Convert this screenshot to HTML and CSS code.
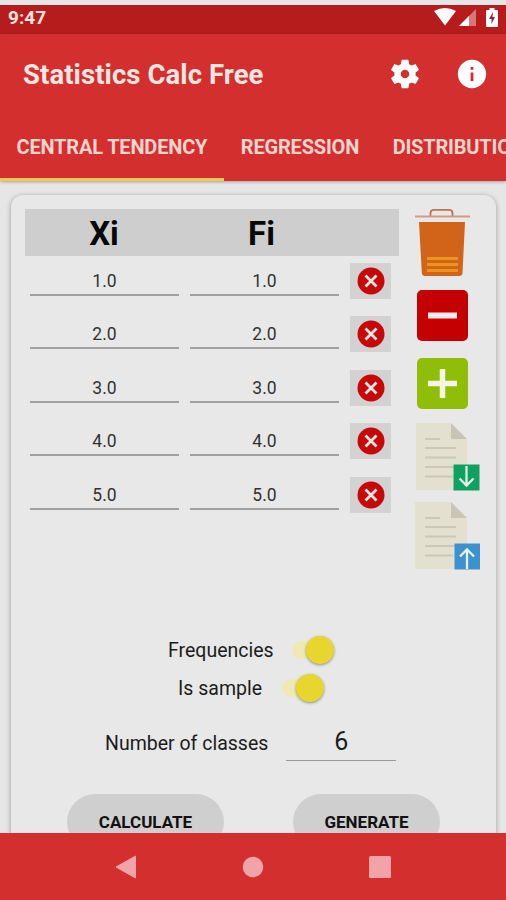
FILE: index.html
```html
<!DOCTYPE html>
<html lang="en">
<head>
  <meta charset="utf-8">
  <title>Statistics Calc Free</title>
  <link rel="stylesheet" href="styles.css">
</head>
<body>
  <div class="statusbar">
    <span class="time">9:47</span>
    <svg class="wifi" width="22" height="18" viewBox="0 0 22 18"><path d="M0 3Q11 -3 22 3L11 17.500Z" fill="#fff"/></svg>
    <svg class="signal" width="17" height="17" viewBox="0 0 17 17"><path d="M0 17L17 0V17Z" fill="#dc7676"/><path d="M0 17L10 7V17Z" fill="#fff"/></svg>
    <svg class="battery" width="12" height="19" viewBox="0 0 12 19"><path d="M3.500 2V0h5v2H11q1 0 1 1v15q0 1-1 1H1q-1 0-1-1V3q0-1 1-1z" fill="#fff"/><path d="M7 4L3 11h2.500v5L9 9H6.500z" fill="#8d2a4a"/></svg>
  </div>

  <header class="header">
    <div class="toolbar">
      <h1>Statistics Calc Free</h1>
      <svg class="gear" width="34" height="34" viewBox="0 0 24 24"><path fill="#fff" d="M19.430 12.980c.04-.32.07-.64.07-.98s-.03-.66-.07-.98l2.110-1.650c.19-.15.24-.42.12-.64l-2-3.460c-.12-.22-.39-.3-.61-.22l-2.490 1c-.52-.4-1.080-.73-1.690-.98l-.38-2.650C14.460 2.180 14.250 2 14 2h-4c-.25 0-.46.18-.49.42l-.38 2.650c-.61.25-1.170.59-1.690.98l-2.490-1c-.23-.09-.49 0-.61.22l-2 3.460c-.13.22-.07.49.12.64l2.110 1.650c-.04.32-.07.65-.07.98s.03.66.07.98l-2.110 1.650c-.19.15-.24.42-.12.64l2 3.460c.12.22.39.3.61.22l2.490-1c.52.4 1.080.73 1.690.98l.38 2.650c.03.24.24.42.49.42h4c.25 0 .46-.18.49-.42l.38-2.650c.61-.25 1.170-.59 1.690-.98l2.490 1c.23.09.49 0 .61-.22l2-3.460c.12-.22.07-.49-.12-.64l-2.110-1.650zM12 15c-1.660 0-3-1.340-3-3s1.340-3 3-3 3 1.340 3 3-1.340 3-3 3z"/></svg>
      <svg class="info" width="34" height="34" viewBox="0 0 24 24"><path fill="#fff" d="M12 2C6.480 2 2 6.480 2 12s4.480 10 10 10 10-4.480 10-10S17.520 2 12 2zm1 15h-2v-6h2v6zm0-8h-2V7h2v2z"/></svg>
    </div>
    <nav class="tabs">
      <span class="tab active">CENTRAL TENDENCY</span>
      <span class="tab">REGRESSION</span>
      <span class="tab">DISTRIBUTIONS</span>
    </nav>
  </header>

  <main class="content">
    <div class="card">
      <div class="data">
        <div class="table">
          <div class="thead"><b>Xi</b><b>Fi</b></div>
          <div class="row">
            <span class="value">1.0</span><span class="value">1.0</span>
            <span class="delete"><svg width="28" height="28" viewBox="0 0 28 28"><circle cx="14" cy="14" r="13.500" fill="#c60808"/><path d="M8.500 8.500l11 11M19.500 8.500l-11 11" stroke="#fbe4e4" stroke-width="2.800"/></svg></span>
          </div>
          <div class="row">
            <span class="value">2.0</span><span class="value">2.0</span>
            <span class="delete"><svg width="28" height="28" viewBox="0 0 28 28"><circle cx="14" cy="14" r="13.500" fill="#c60808"/><path d="M8.500 8.500l11 11M19.500 8.500l-11 11" stroke="#fbe4e4" stroke-width="2.800"/></svg></span>
          </div>
          <div class="row">
            <span class="value">3.0</span><span class="value">3.0</span>
            <span class="delete"><svg width="28" height="28" viewBox="0 0 28 28"><circle cx="14" cy="14" r="13.500" fill="#c60808"/><path d="M8.500 8.500l11 11M19.500 8.500l-11 11" stroke="#fbe4e4" stroke-width="2.800"/></svg></span>
          </div>
          <div class="row">
            <span class="value">4.0</span><span class="value">4.0</span>
            <span class="delete"><svg width="28" height="28" viewBox="0 0 28 28"><circle cx="14" cy="14" r="13.500" fill="#c60808"/><path d="M8.500 8.500l11 11M19.500 8.500l-11 11" stroke="#fbe4e4" stroke-width="2.800"/></svg></span>
          </div>
          <div class="row">
            <span class="value">5.0</span><span class="value">5.0</span>
            <span class="delete"><svg width="28" height="28" viewBox="0 0 28 28"><circle cx="14" cy="14" r="13.500" fill="#c60808"/><path d="M8.500 8.500l11 11M19.500 8.500l-11 11" stroke="#fbe4e4" stroke-width="2.800"/></svg></span>
          </div>
        </div>

        <div class="tools">
          <!-- trash -->
          <svg class="trash" width="56" height="68" viewBox="0 0 56 68">
            <path d="M15.500 7V4Q15.500 .9 19 .9H34Q37.500 .9 37.500 4V7" fill="none" stroke="#bd7250" stroke-width="1.800"/>
            <path d="M0 7.500H55" stroke="#d39a80" stroke-width="2"/>
            <path d="M4 13H50L47.500 64Q47.300 67 44 67H10Q7 67 6.800 64Z" fill="#d26419"/>
            <path d="M12 49.500H43M12 55.500H43M12 61.500H43" stroke="#e8961c" stroke-width="3"/>
          </svg>
          <!-- remove / add row -->
          <svg class="minus" width="51" height="51" viewBox="0 0 51 51"><rect width="51" height="51" rx="5" fill="#c40000"/><path d="M11 25.500H40" stroke="#fbe9e9" stroke-width="6"/></svg>
          <svg class="plus" width="51" height="51" viewBox="0 0 51 51"><rect width="51" height="51" rx="5" fill="#90be08"/><path d="M11 25.500H40M25.500 11V40" stroke="#f3f6e4" stroke-width="5.500"/></svg>
          <!-- import / export -->
          <svg class="doc" width="65" height="68" viewBox="0 0 65 68">
            <path d="M1 0H36L52 16V67H1Z" fill="#e3e0d0"/>
            <path d="M36 0L52 16H36Z" fill="#c9c5b5"/>
            <path d="M10 16H25M10 25H41M10 34.500H41M10 44H41M10 53.500H38" stroke="#cbc8b9" stroke-width="1.800"/>
            <rect x="38.500" y="41.500" width="26" height="26" fill="#10a160"/>
            <path d="M51.500 43V62M44.500 55.500L51.500 62.500L58.500 55.500" fill="none" stroke="#e4f4e8" stroke-width="2.300"/>
          </svg>
          <svg class="doc" width="65" height="68" viewBox="0 0 65 68">
            <path d="M0 0H36L52 16V67H0Z" fill="#e3e0d0"/>
            <path d="M36 0L52 16H36Z" fill="#c9c5b5"/>
            <path d="M10 16H25M10 25H41M10 34.500H41M10 44H41M10 53.500H38" stroke="#cbc8b9" stroke-width="1.800"/>
            <rect x="39.500" y="41.500" width="25.500" height="26" fill="#3d92cd"/>
            <path d="M52 67V48M45 54.500L52 47.500L59 54.500" fill="none" stroke="#e4f1fa" stroke-width="2.300"/>
          </svg>
        </div>
      </div>

      <div class="option frequencies">Frequencies <span class="switch"></span></div>
      <div class="option sample">Is sample <span class="switch"></span></div>
      <div class="classes">Number of classes <span class="number">6</span></div>
      <div class="buttons">
        <span class="button calculate">CALCULATE</span>
        <span class="button generate">GENERATE</span>
      </div>
    </div>
  </main>

  <footer class="navbar">
    <svg width="22" height="24" viewBox="0 0 22 24"><path d="M1 12L20.500 1V23Z" fill="#f2a3a8" stroke="#f2a3a8" stroke-linejoin="round"/></svg>
    <svg width="22" height="22" viewBox="0 0 22 22"><circle cx="11" cy="11" r="10.300" fill="#f2a3a8"/></svg>
    <svg width="22" height="22" viewBox="0 0 22 22"><rect width="22" height="22" rx="1.500" fill="#f2a3a8"/></svg>
  </footer>
</body>
</html>
```
FILE: styles.css
```css
*{box-sizing: border-box;}
body{
  margin: 0;
  height: 900px;
  padding-top: 5px;
  display: flex;
  flex-direction: column;
  overflow: hidden;
  background-color: #e6e6e6;
  font-family: Roboto, sans-serif;
  color: #1c1c1c;
  white-space: nowrap;
}
svg{display: block; flex: none;}

/* status bar */
.statusbar{
  height: 29px;
  display: flex;
  align-items: flex-start;
  padding: 3px 8px 0 8px;
  background-color: #b71c1c;
}
.time{
  margin-right: auto;
  font-size: 19px;
  line-height: 20px;
  font-weight: 700;
  color: #fbe3de;
}
.signal{margin: 1px 10px 0 3px;}

/* header */
.header{
  height: 147px;
  flex: none;
  background-color: #d32f2f;
  box-shadow: 0 1px 3px rgba(0,0,0,.3);
  position: relative;
}
.toolbar{
  height: 80px;
  display: flex;
  align-items: center;
  padding: 0 17px 0 23px;
}
.toolbar h1{
  margin: 1px auto 0 0;
  font-size: 27.500px;
  font-weight: 700;
  letter-spacing: .08px;
  color: #fbe6e0;
}
.gear{margin-right: 33px;}
.tabs{
  height: 67px;
  display: flex;
  overflow: hidden;
}
.tab{
  flex: none;
  padding: 0 17px 0 16.500px;
  line-height: 67px;
  font-size: 20px;
  font-weight: 700;
  letter-spacing: -.18px;
  color: #f9d5ce;
}
.tab.active{border-bottom: 3px solid #f2c84b;}

/* card */
.content{
  flex: 1;
  min-height: 0;
  overflow: hidden;
  padding: 14px 10px 0 11px;
}
.card{
  height: 700px;
  padding: 14px 14px 0;
  background-color: #e8e8e8;
  border-radius: 12px;
  box-shadow: 0 1px 5px rgba(0,0,0,.35);
}
.data{
  height: 422px;
  display: flex;
}
.table{width: 374px;}
.thead{
  height: 47px;
  display: flex;
  margin-bottom: 7px;
  background-color: #cecece;
  font-size: 33px;
  line-height: 49px;
  color: #080808;
  text-align: center;
}
.thead b{width: 157px;}
.thead b:first-child{width: 158px;}
.row{
  height: 53.400px;
  display: flex;
  align-items: flex-start;
  padding-left: 5px;
}
.value{
  width: 149px;
  height: 33px;
  margin-right: 11px;
  border-bottom: 2px solid #a0a0a0;
  font-size: 17.500px;
  line-height: 36px;
  text-align: center;
  color: #333;
}
.delete{
  width: 41px;
  height: 36px;
  display: flex;
  align-items: center;
  justify-content: center;
  background-color: #d2d2d2;
}

/* tools */
.tools{padding-left: 16px;}
.minus{margin: 13px 0 0 2px;}
.plus{margin: 17px 0 14px 2px;}
.doc{margin-bottom: 10.500px;}

/* options */
.option, .classes{
  display: flex;
  align-items: center;
  height: 38px;
  font-size: 19.500px;
}
.frequencies{padding-left: 143px;}
.sample{padding-left: 153px;}
.switch{
  width: 42px;
  height: 18px;
  margin-left: 18px;
  border-radius: 9px;
  background-color: #efeab5;
  display: flex;
  align-items: center;
  justify-content: flex-end;
}
.sample .switch{margin-left: 20px;}
.switch:after{
  content: "";
  width: 28px;
  height: 28px;
  border-radius: 50%;
  background-color: #e8d62f;
  box-shadow: 0 1px 3px rgba(0,0,0,.4);
}
.classes{
  height: 54px;
  padding-left: 80px;
  margin-top: 9px;
}
.number{
  width: 110px;
  height: 38px;
  margin: -2px 0 0 18px;
  border-bottom: 1px solid #999;
  font-size: 25px;
  line-height: 38px;
  text-align: center;
}
.buttons{
  display: flex;
  margin-top: 24px;
  padding-left: 42px;
}
.button{
  height: 56px;
  border-radius: 28px;
  background-color: #cfcfcf;
  font-size: 17px;
  line-height: 57px;
  font-weight: 700;
  text-align: center;
  color: #111;
}
.calculate{width: 157px; margin-right: 69px;}
.generate{width: 147px;}

/* bottom navigation */
.navbar{
  height: 67px;
  flex: none;
  display: flex;
  align-items: center;
  gap: 105px;
  padding-left: 115px;
  background-color: #d32f2f;
  position: relative;
}
```
